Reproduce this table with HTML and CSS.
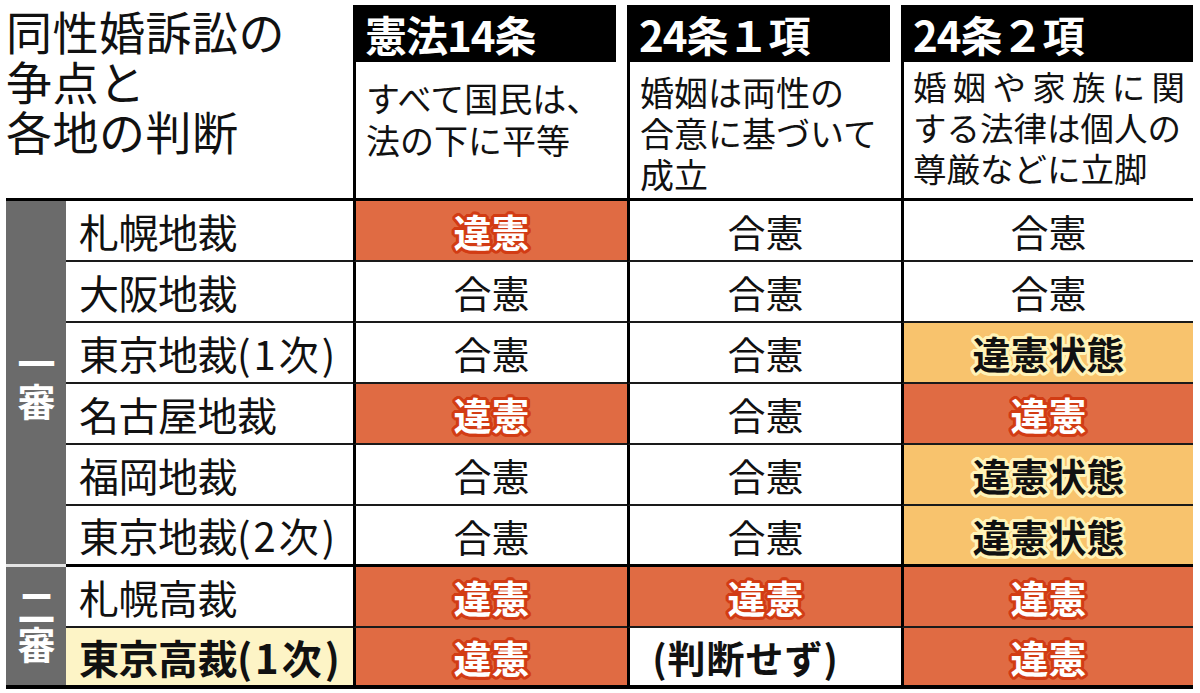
FILE: index.html
```html
<!DOCTYPE html>
<html lang="ja">
<head>
<meta charset="utf-8">
<title>同性婚訴訟の争点と各地の判断</title>
<link rel="stylesheet" href="styles.css">
</head>
<body>
<div class="chart">
  <div class="title"><span class="tline">同性婚訴訟の</span><span class="tline">争点と</span><span class="tline">各地の判断</span></div>
  <div class="hcol c1">
    <div class="bar">憲法14条</div>
    <div class="desc">すべて国民は、<br>法の下に平等</div>
  </div>
  <div class="hcol c2">
    <div class="bar">24条１項</div>
    <div class="desc">婚姻は両性の<br>合意に基づいて<br>成立</div>
  </div>
  <div class="hcol c3">
    <div class="bar">24条２項</div>
    <div class="desc"><span class="just">婚姻や家族に関</span><span class="line">する法律は個人の</span><span class="line">尊厳などに立脚</span></div>
  </div>

  <div class="stage s1">一審</div>
  <div class="name">札幌地裁</div>
  <div class="v red"><span>違憲</span></div>
  <div class="v">合憲</div>
  <div class="v">合憲</div>

  <div class="name">大阪地裁</div>
  <div class="v">合憲</div>
  <div class="v">合憲</div>
  <div class="v">合憲</div>

  <div class="name">東京地裁<span class="paren">(1次)</span></div>
  <div class="v">合憲</div>
  <div class="v">合憲</div>
  <div class="v amber"><span>違憲状態</span></div>

  <div class="name">名古屋地裁</div>
  <div class="v red"><span>違憲</span></div>
  <div class="v">合憲</div>
  <div class="v red"><span>違憲</span></div>

  <div class="name">福岡地裁</div>
  <div class="v">合憲</div>
  <div class="v">合憲</div>
  <div class="v amber"><span>違憲状態</span></div>

  <div class="name r6">東京地裁<span class="paren">(2次)</span></div>
  <div class="v r6">合憲</div>
  <div class="v r6">合憲</div>
  <div class="v amber r6"><span>違憲状態</span></div>

  <div class="stage s2">二審</div>
  <div class="name">札幌高裁</div>
  <div class="v red"><span>違憲</span></div>
  <div class="v red"><span>違憲</span></div>
  <div class="v red"><span>違憲</span></div>

  <div class="name hl last">東京高裁<span class="paren">(1次)</span></div>
  <div class="v red last"><span>違憲</span></div>
  <div class="v bold shift last"><span class="paren2">(判断せず)</span></div>
  <div class="v red last"><span>違憲</span></div>
</div>
</body>
</html>
```

FILE: styles.css
```css
html, body {
  margin: 0;
  padding: 0;
  background: #fff;
}

body {
  font-family: "Noto Sans CJK JP", "Noto Sans", sans-serif;
  color: #111;
}

.chart {
  display: grid;
  grid-template-columns: 60px 287px 274px 274px 292px;
  grid-template-rows: 196px;
  width: 1187px;
  margin: 5px 0 0 6px;
}

.title {
  grid-column: span 2;
  font-size: 46px;
  line-height: 50px;
  font-weight: 400;
  letter-spacing: 0.5px;
  border-bottom: 3px solid #000;
  color: #111;
  white-space: nowrap;
}

.tline {
  display: block;
  height: 50px;
}

.hcol {
  display: flex;
  flex-direction: column;
  border-bottom: 3px solid #000;
}

.bar {
  height: 57px;
  background: #000;
  color: #fff;
  font-size: 42px;
  font-weight: 700;
  display: flex;
  align-items: center;
  padding-left: 12px;
  letter-spacing: -1px;
  white-space: nowrap;
}

.c1 .bar, .c2 .bar {
  margin-right: 11px;
}

.desc {
  flex: 1;
  border-left: 3px solid #000;
  font-size: 34px;
  line-height: 42px;
  padding-left: 10px;
  padding-right: 4px;
  white-space: nowrap;
}

.c1 .desc { padding-top: 15px; }
.c2 .desc { padding-top: 9px; line-height: 41px; }
.c3 .desc {
  padding-top: 3px;
  padding-left: 9px;
  padding-right: 8px;
  line-height: 41px;
  font-size: 33.5px;
}

.just {
  display: block;
  text-align: justify;
  text-align-last: justify;
  white-space: normal;
}

.line {
  display: block;
}

.stage {
  background: #6b6b6b;
  color: #fff;
  font-size: 38px;
  font-weight: 700;
  writing-mode: vertical-rl;
  display: flex;
  align-items: center;
  justify-content: center;
  line-height: 60px;
}

.s1 {
  grid-row: span 6;
  border-bottom: 3px solid #e4e4e4;
}

.s2 {
  grid-row: span 2;
  border-bottom: 4px solid #000;
}

.name, .v {
  height: 61px;
  box-sizing: border-box;
  border-bottom: 2px solid #1a1a1a;
  display: flex;
  align-items: center;
  white-space: nowrap;
}

.name {
  font-size: 40px;
  padding-left: 13px;
  letter-spacing: -0.5px;
}

.paren {
  letter-spacing: 3px;
}

.paren2 {
  letter-spacing: 1px;
}

.v {
  border-left: 3px solid #000;
  justify-content: center;
  font-size: 38px;
}

.shift {
  padding-right: 40px;
}

.r6 {
  border-bottom: 3px solid #000;
}

.last {
  border-bottom: 4px solid #000;
}

.hl {
  background: #fdf4c6;
  font-weight: 700;
}

.bold {
  font-weight: 700;
}

.red {
  background: #e06b43;
}

.red span {
  color: #fff;
  font-weight: 700;
  text-shadow:
    3px 0 0 #d23c14, -3px 0 0 #d23c14, 0 3px 0 #d23c14, 0 -3px 0 #d23c14,
    2px 2px 0 #d23c14, -2px 2px 0 #d23c14, 2px -2px 0 #d23c14, -2px -2px 0 #d23c14,
    3px 1px 0 #d23c14, -3px 1px 0 #d23c14, 3px -1px 0 #d23c14, -3px -1px 0 #d23c14,
    1px 3px 0 #d23c14, -1px 3px 0 #d23c14, 1px -3px 0 #d23c14, -1px -3px 0 #d23c14;
}

.amber {
  background: #f8c36d;
}

.amber span {
  color: #111;
  font-weight: 700;
  text-shadow:
    3px 0 0 #fff3b8, -3px 0 0 #fff3b8, 0 3px 0 #fff3b8, 0 -3px 0 #fff3b8,
    2px 2px 0 #fff3b8, -2px 2px 0 #fff3b8, 2px -2px 0 #fff3b8, -2px -2px 0 #fff3b8,
    3px 1px 0 #fff3b8, -3px 1px 0 #fff3b8, 3px -1px 0 #fff3b8, -3px -1px 0 #fff3b8,
    1px 3px 0 #fff3b8, -1px 3px 0 #fff3b8, 1px -3px 0 #fff3b8, -1px -3px 0 #fff3b8;
}
```
